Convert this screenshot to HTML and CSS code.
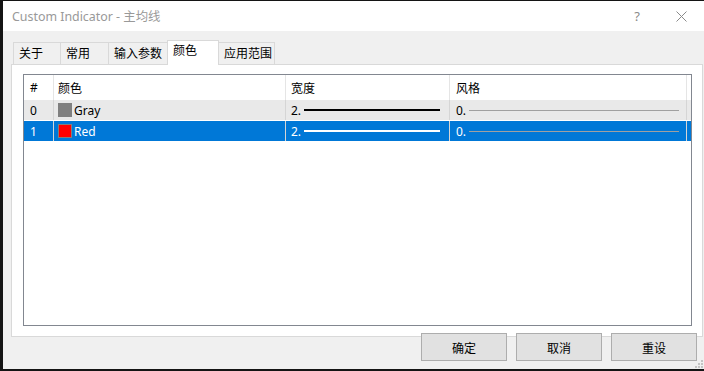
FILE: index.html
```html
<!DOCTYPE html>
<html lang="zh-CN">
<head>
    <meta charset="UTF-8">
    <title>Custom Indicator - 主均线</title>
    <link rel="stylesheet" href="styles.css">
</head>
<body>
<div class="dialog">
    <div class="titlebar">
        <span class="title">Custom Indicator - 主均线</span>
        <span class="help">?</span>
        <svg class="close" width="11" height="11" viewBox="0 0 11 11">
            <path d="M0.5 0.5 L10.5 10.5 M10.5 0.5 L0.5 10.5" stroke="#8a8a8a" stroke-width="1" fill="none"/>
        </svg>
    </div>

    <div class="tabs">
        <div class="tab t1">关于</div>
        <div class="tab t2">常用</div>
        <div class="tab t3">输入参数</div>
        <div class="tab active t4">颜色</div>
        <div class="tab t5">应用范围</div>
    </div>

    <div class="panel">
        <div class="list">
            <div class="row head">
                <div class="cell c-num">#</div>
                <div class="cell c-color">颜色</div>
                <div class="cell c-width">宽度</div>
                <div class="cell c-style">风格</div>
            </div>
            <div class="row item">
                <div class="cell c-num">0</div>
                <div class="cell c-color"><span class="swatch gray"></span>Gray</div>
                <div class="cell c-width">2.<span class="wline"></span></div>
                <div class="cell c-style">0.<span class="sline"></span></div>
            </div>
            <div class="row item selected">
                <div class="cell c-num">1</div>
                <div class="cell c-color"><span class="swatch red"></span>Red</div>
                <div class="cell c-width">2.<span class="wline"></span></div>
                <div class="cell c-style">0.<span class="sline"></span></div>
            </div>
        </div>
    </div>

    <div class="buttons">
        <button class="btn">确定</button>
        <button class="btn">取消</button>
        <button class="btn">重设</button>
    </div>

    <svg class="grip" width="8" height="8" viewBox="0 0 8 8">
        <rect x="6" y="0" width="2" height="2" fill="#c4c4c4"/>
        <rect x="3" y="3" width="2" height="2" fill="#c4c4c4"/>
        <rect x="6" y="3" width="2" height="2" fill="#c4c4c4"/>
        <rect x="0" y="6" width="2" height="2" fill="#c4c4c4"/>
        <rect x="3" y="6" width="2" height="2" fill="#c4c4c4"/>
        <rect x="6" y="6" width="2" height="2" fill="#c4c4c4"/>
    </svg>
</div>
</body>
</html>
```

FILE: styles.css
```css
html, body {
    margin: 0;
    padding: 0;
}

body {
    width: 704px;
    height: 371px;
    overflow: hidden;
    background: #141414;
    font-family: "Noto Sans", "Noto Sans CJK SC", sans-serif;
    font-size: 12px;
    color: #000;
}

.dialog {
    position: relative;
    margin: 1px 0 0 3px;
    height: 368px;
    background: #f0f0f0;
    display: flex;
    flex-direction: column;
}

.titlebar {
    height: 30px;
    flex: none;
    background: #fff;
    display: flex;
    align-items: center;
    padding-left: 9px;
}

.title {
    font-size: 12.4px;
    color: #999;
    flex: 1;
    margin-top: -1px;
}

.help {
    font-size: 13px;
    color: #8a8a8a;
    margin-right: 36px;
    margin-top: -1px;
}

.close {
    margin-right: 17px;
}

.tabs {
    display: flex;
    align-items: flex-end;
    height: 33px;
    padding-left: 10px;
    flex: none;
}

.tab {
    height: 22px;
    box-sizing: border-box;
    border: 1px solid #d9d9d9;
    border-bottom: none;
    margin-right: -1px;
    background: #f0f0f0;
    padding-left: 5px;
    line-height: 22px;
}

.t1 { width: 48px; }
.t2 { width: 49px; }
.t3 { width: 60px; }
.t4 { width: 52px; }
.t5 { width: 57px; }

.tab.active {
    height: 25px;
    background: #fff;
    line-height: 20px;
    position: relative;
    z-index: 1;
    margin-bottom: -1px;
}

.panel {
    margin: 0 1px 0 8px;
    height: 273px;
    box-sizing: border-box;
    flex: none;
    background: #fff;
    border: 1px solid #d9d9d9;
    padding: 9px 10px 0 11px;
}

.list {
    height: 252px;
    box-sizing: border-box;
    border: 1px solid #828790;
}

.row {
    display: flex;
    height: 20px;
    align-items: center;
}

.row.head {
    height: 25px;
}

.row.item {
    background: #e9e9e9;
    border-bottom: 1px solid #fff;
}

.row.selected {
    background: #0078d7;
    color: #fff;
}

.cell {
    height: 100%;
    box-sizing: border-box;
    display: flex;
    align-items: center;
    border-right: 1px solid #d5d5d5;
    padding-left: 6px;
}

.head .cell {
    border-right-color: #e5e5e5;
}

.c-num { width: 30px; }
.c-color { width: 232px; padding-left: 4px; }
.c-width { width: 164px; padding-left: 5px; }
.c-style { width: 237px; }

.swatch {
    width: 14px;
    height: 14px;
    box-sizing: border-box;
    border: 1px solid #808080;
    margin-right: 2px;
}

.swatch.gray { background: #808080; }
.swatch.red { background: #ff0000; }

.wline {
    width: 136px;
    height: 2px;
    margin-left: 3px;
    background: #000;
}

.selected .wline {
    background: #fff;
}

.sline {
    width: 210px;
    height: 1px;
    margin-left: 3px;
    background: #a0a0a0;
}

.buttons {
    display: flex;
    justify-content: flex-end;
    padding: 0 7px 0 0;
    margin-top: -4px;
    gap: 9px;
}

.btn {
    width: 86px;
    height: 28px;
    box-sizing: border-box;
    background: #e1e1e1;
    border: 1px solid #adadad;
    font-family: "Noto Sans CJK SC", sans-serif;
    font-size: 12px;
    color: #000;
    padding: 0;
}

.grip {
    position: absolute;
    right: 1px;
    bottom: 1px;
}
```
